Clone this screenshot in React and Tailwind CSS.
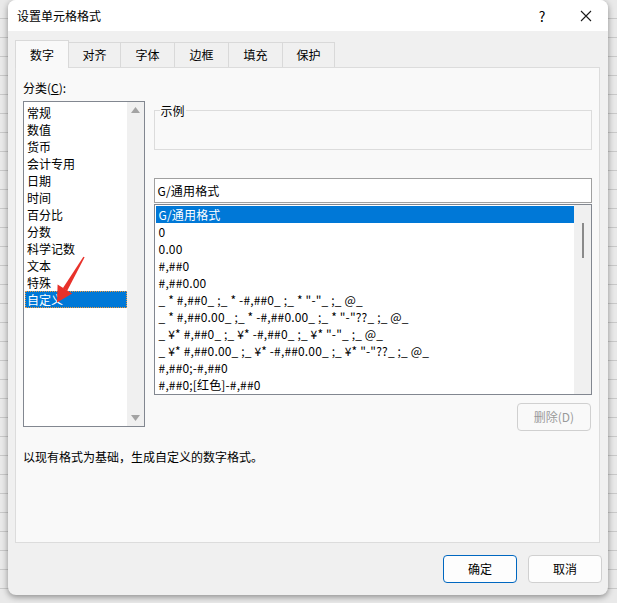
import React from "react";

const categories = [
  "常规",
  "数值",
  "货币",
  "会计专用",
  "日期",
  "时间",
  "百分比",
  "分数",
  "科学记数",
  "文本",
  "特殊",
  "自定义",
];

const formats = [
  "G/通用格式",
  "0",
  "0.00",
  "#,##0",
  "#,##0.00",
  '_ * #,##0_ ;_ * -#,##0_ ;_ * "-"_ ;_ @_',
  '_ * #,##0.00_ ;_ * -#,##0.00_ ;_ * "-"??_ ;_ @_',
  '_ ¥* #,##0_ ;_ ¥* -#,##0_ ;_ ¥* "-"_ ;_ @_',
  '_ ¥* #,##0.00_ ;_ ¥* -#,##0.00_ ;_ ¥* "-"??_ ;_ @_',
  "#,##0;-#,##0",
  "#,##0;[红色]-#,##0",
];

const tabs = [
  { label: "数字", w: "w-[54px]" },
  { label: "对齐", w: "w-[52px]" },
  { label: "字体", w: "w-[54px]" },
  { label: "边框", w: "w-[54px]" },
  { label: "填充", w: "w-[54px]" },
  { label: "保护", w: "w-[52px]" },
];

function CloseIcon() {
  return (
    <svg width="12" height="12" viewBox="0 0 12 12" className="text-[#1a1a1a]">
      <path d="M1 1 L11 11 M11 1 L1 11" stroke="currentColor" strokeWidth="1.1" />
    </svg>
  );
}

function RedArrow() {
  // tail (84,257) -> tip (57,302)
  return (
    <svg
      className="absolute left-0 top-0 pointer-events-none"
      width="617"
      height="603"
      viewBox="0 0 617 603"
    >
      <polygon points="84.6,257.3 83.4,256.7 62.8,288.2 67.2,290.8" fill="#e8312a" />
      <polygon points="57,302.5 57.6,284.6 72.2,293.4" fill="#e8312a" />
    </svg>
  );
}

export default function App() {
  return (
    <div className="relative w-[617px] h-[603px] overflow-hidden bg-[repeating-linear-gradient(to_bottom,#e9e9e9_0px,#e9e9e9_18px,#c9c9c9_18px,#c9c9c9_19px)] pl-[8px] font-['Noto_Sans_CJK_SC',sans-serif] text-[12px] text-black">
      {/* Dialog */}
      <div className="w-[600px] h-[595px] flex flex-col rounded-lg bg-[#f0f0f0] shadow-[0_2px_6px_rgba(0,0,0,0.4)] overflow-hidden">
        {/* Title bar */}
        <div className="h-[31px] shrink-0 bg-white flex items-center pl-[9px]">
          <span className="text-[12px] leading-none">设置单元格格式</span>
          <span className="ml-auto w-[12px] text-center text-[14px] leading-none mr-[32px]">?</span>
          <span className="mr-[16px] flex items-center">
            <CloseIcon />
          </span>
        </div>

        {/* Tabs */}
        <div className="mt-[9px] pl-[7px] flex items-end relative z-10">
          {tabs.map((t, i) =>
            i === 0 ? (
              <div
                key={t.label}
                className={`${t.w} h-[28px] -mb-px bg-[#f9f9f9] border border-b-0 border-[#d9d9d9] flex items-center justify-center`}
              >
                {t.label}
              </div>
            ) : (
              <div
                key={t.label}
                className={`${t.w} h-[25px] bg-[#f0f0f0] border-t border-r border-[#d9d9d9] flex items-center justify-center`}
              >
                {t.label}
              </div>
            )
          )}
        </div>

        {/* Tab panel */}
        <div className="ml-[7px] w-[585px] h-[476px] shrink-0 bg-[#f9f9f9] border border-[#dcdcdc] px-[7px] flex flex-col">
          <div className="mt-[11px] h-[17px] leading-[17px]">
            分类(<span className="underline">C</span>):
          </div>

          <div className="mt-[5px] flex">
            {/* Category list */}
            <div className="w-[122px] h-[326px] border border-[#828790] bg-white flex">
              <div className="flex-1 pt-[2px] pl-px">
                {categories.map((c) =>
                  c === "自定义" ? (
                    <div
                      key={c}
                      className="h-[17px] leading-[15px] pl-px bg-[#0078d7] text-white border border-dotted border-[#f09a3e]"
                    >
                      {c}
                    </div>
                  ) : (
                    <div key={c} className="h-[17px] leading-[17px] pl-[2px]">
                      {c}
                    </div>
                  )
                )}
              </div>
              <div className="w-[17px] bg-[#f0f0f0] flex flex-col items-center justify-between py-[5px]">
                <svg width="9" height="6" viewBox="0 0 9 6">
                  <polygon points="4.5,0 9,6 0,6" fill="#a3a3a3" />
                </svg>
                <svg width="9" height="6" viewBox="0 0 9 6">
                  <polygon points="0,0 9,0 4.5,6" fill="#a3a3a3" />
                </svg>
              </div>
            </div>

            {/* Right column */}
            <div className="ml-[9px] w-[440px] flex flex-col">
              {/* Sample group */}
              <div className="relative mt-[9px] h-[40px] border border-[#dcdcdc]">
                <span className="absolute left-[5px] -top-[9px] px-px bg-[#f9f9f9] leading-[17px]">
                  示例
                </span>
              </div>

              {/* Type input */}
              <div className="mt-[28px] h-[25px] border border-[#a0a0a0] bg-white flex items-center pl-[3px] tracking-[0.15px]">
                G/通用格式
              </div>

              {/* Format list */}
              <div className="mt-px h-[191px] border border-[#828790] bg-white flex tracking-[0.15px]">
                <div className="flex-1 pt-px pl-px overflow-hidden">
                  {formats.map((f, i) => (
                    <div
                      key={f}
                      className={`h-[17px] leading-[17px] pl-[3px] whitespace-pre ${
                        i === 0 ? "bg-[#0078d7] text-white" : ""
                      }`}
                    >
                      {f}
                    </div>
                  ))}
                </div>
                <div className="w-[17px] bg-[#f0f0f0] flex justify-center pt-[18px]">
                  <div className="w-[2px] h-[35px] bg-[#8a8a8a]" />
                </div>
              </div>

              <button className="mt-[8px] self-end mr-[1px] w-[74px] h-[28px] rounded-[4px] border border-[#d0d0d0] bg-[#f9f9f9] text-[#9a9a9a]">
                删除(D)
              </button>
            </div>
          </div>

          <div className="mt-[17px] h-[17px] leading-[17px]">
            以现有格式为基础，生成自定义的数字格式。
          </div>
        </div>

        {/* Footer buttons */}
        <div className="mt-[12px] flex justify-end gap-[11px] pr-[6px]">
          <button className="w-[74px] h-[28px] rounded-[4px] border border-[#0067c0] bg-[#fdfdfd]">
            确定
          </button>
          <button className="w-[74px] h-[28px] rounded-[4px] border border-[#d0d0d0] bg-[#fdfdfd]">
            取消
          </button>
        </div>
      </div>

      <RedArrow />
    </div>
  );
}
